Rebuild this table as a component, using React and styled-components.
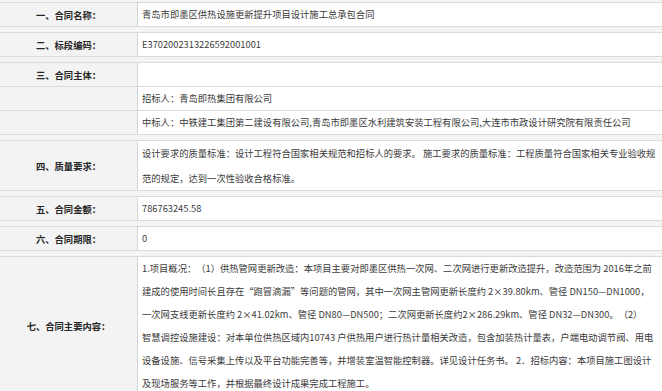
import React from 'react';
import styled, { createGlobalStyle } from 'styled-components';

const GlobalStyle = createGlobalStyle`
  html, body {
    margin: 0;
    padding: 0;
    background: #f4f4f4;
  }
  body {
    font-family: "Noto Sans CJK SC", "Microsoft YaHei", sans-serif;
    text-spacing-trim: space-all;
  }
`;

const Page = styled.div`
  width: 662px;
  padding-top: 2px;
  display: flex;
  flex-direction: column;
  gap: 5px;
`;

const Block = styled.div`
  border-top: 1px solid #dadada;
  border-bottom: 1px solid #dadada;
  background: #ffffff;
`;

const Row = styled.div`
  display: grid;
  grid-template-columns: 138px 1fr;
  border-top: ${props => (props.divided ? '1px solid #dadada' : 'none')};
`;

const Label = styled.div`
  background: #f3f3f3;
  border-right: 1px solid #d4d4d4;
  display: flex;
  align-items: center;
  justify-content: center;
  font-size: 9.3px;
  font-weight: bold;
  color: #262626;
  min-height: 23px;
`;

const Value = styled.div`
  padding: 0 5px 0 4px;
  font-size: 9.3px;
  color: #3a3a3a;
  line-height: ${props => props.lineHeight || '23px'};
  min-height: 23px;
  word-break: break-all;
  text-spacing-trim: space-all;
  overflow: hidden;
`;

const Line = styled.span`
  display: block;
  white-space: nowrap;
`;

const qualityLines = [
  '设计要求的质量标准：设计工程符合国家相关规范和招标人的要求。 施工要求的质量标准：工程质量符合国家相关专业验收规',
  '范的规定，达到一次性验收合格标准。',
];

const contentLines = [
  '1.项目概况：（1）供热管网更新改造：本项目主要对即墨区供热一次网、二次网进行更新改造提升，改造范围为 2016年之前',
  '建成的使用时间长且存在“跑冒滴漏”等问题的管网，其中一次网主管网更新长度约 2×39.80km、管径 DN150—DN1000，',
  '一次网支线更新长度约 2×41.02km、管径 DN80—DN500；二次网更新长度约2×286.29km、管径 DN32—DN300。（2）',
  '智慧调控设施建设：对本单位供热区域内10743 户供热用户进行热计量相关改造，包含加装热计量表，户端电动调节阀、用电',
  '设备设施、信号采集上传以及平台功能完善等，并增装室温智能控制器。详见设计任务书。 2．招标内容：本项目施工图设计',
  '及现场服务等工作，并根据最终设计成果完成工程施工。',
];

const Section = ({ label, children, lineHeight }) => (
  <Block>
    <Row>
      <Label>{label}</Label>
      <Value lineHeight={lineHeight}>{children}</Value>
    </Row>
  </Block>
);

export default function App() {
  return (
    <>
      <GlobalStyle />
      <Page>
        <Section label="一、合同名称：">青岛市即墨区供热设施更新提升项目设计施工总承包合同</Section>
        <Section label="二、标段编码：">E3702002313226592001001</Section>
        <Block>
          <Row>
            <Label>三、合同主体：</Label>
            <Value />
          </Row>
          <Row divided>
            <Label />
            <Value>招标人：青岛即热集团有限公司</Value>
          </Row>
          <Row divided>
            <Label />
            <Value>中标人：中铁建工集团第二建设有限公司,青岛市即墨区水利建筑安装工程有限公司,大连市市政设计研究院有限责任公司</Value>
          </Row>
        </Block>
        <Section label="四、质量要求：" lineHeight="24.5px">
          {qualityLines.map(line => <Line key={line}>{line}</Line>)}
        </Section>
        <Section label="五、合同金额：">786763245.58</Section>
        <Section label="六、合同期限：">0</Section>
        <Section label="七、合同主要内容：" lineHeight="23px">
          {contentLines.map(line => <Line key={line}>{line}</Line>)}
        </Section>
      </Page>
    </>
  );
}
